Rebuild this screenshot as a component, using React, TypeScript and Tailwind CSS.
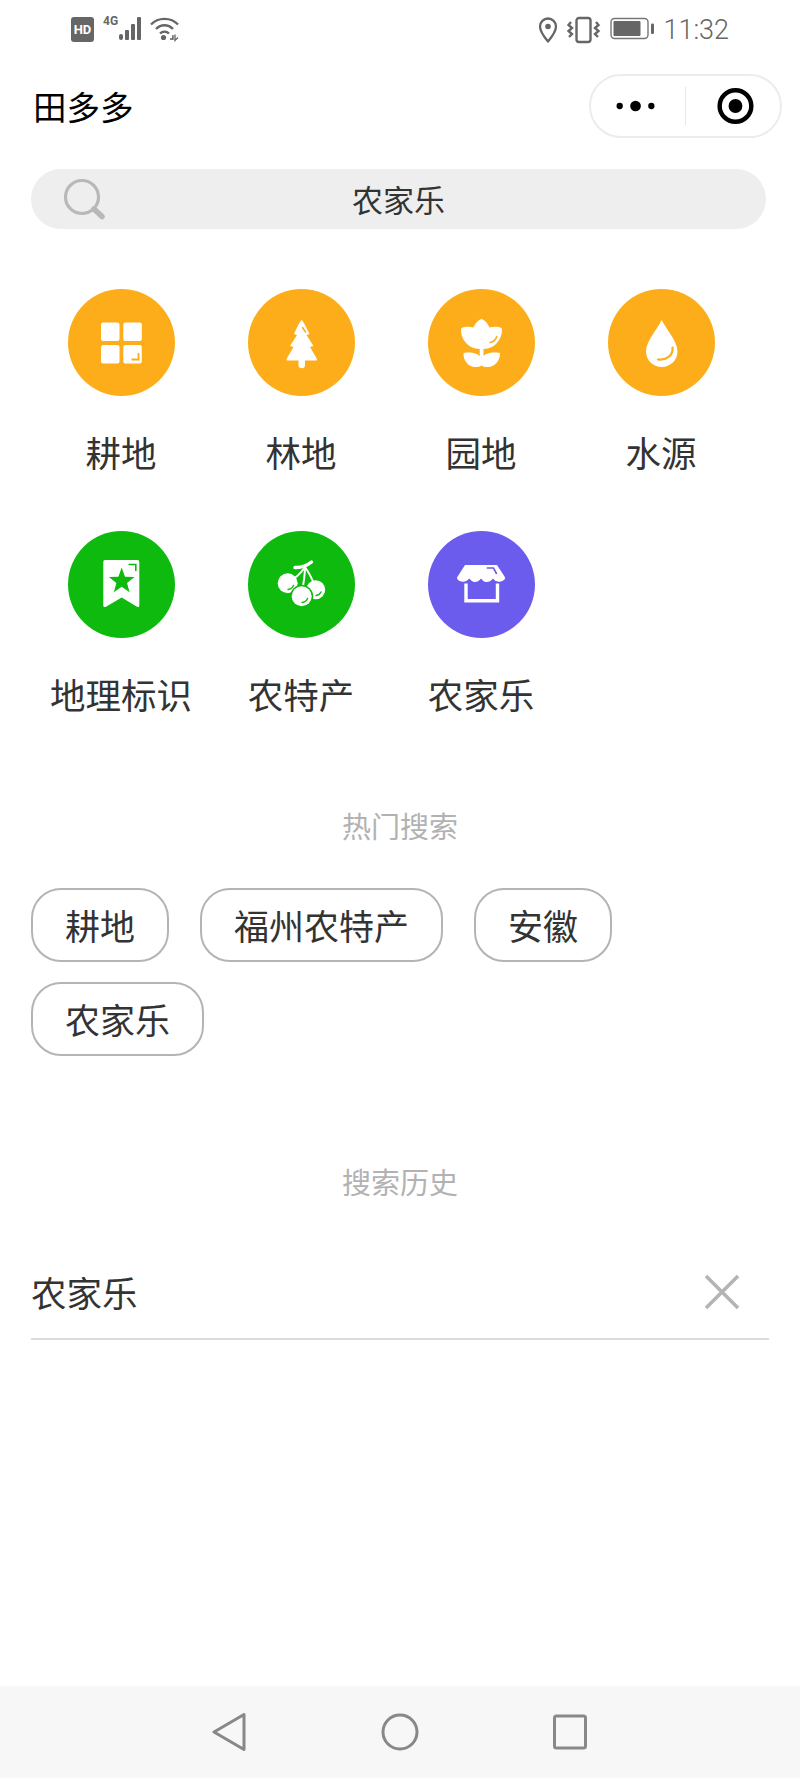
import { ReactNode } from 'react';

const ORANGE = '#fdad19';
const GREEN = '#0dba0d';
const PURPLE = '#6c5ced';

function GridIcon() {
  return (
    <>
      <rect x="33" y="33.5" width="18.5" height="18.5" rx="2" fill="#fff" />
      <rect x="55.3" y="33.5" width="18.5" height="18.5" rx="2" fill="#fff" />
      <rect x="33" y="56" width="18.5" height="18.5" rx="2" fill="#fff" />
      <rect x="55.3" y="56" width="18.5" height="18.5" rx="2" fill="#fff" />
      <path d="M70.5 64v6.5H63.5" fill="none" stroke={ORANGE} strokeWidth="1.8" />
    </>
  );
}

function TreeIcon() {
  return (
    <>
      <path
        d="M53.7 31Q55 31.5 61.5 45L58.5 46L65.5 57L62 58L69 70Q69.5 71.5 68 71.5H57V76a3.2 3.2 0 0 1-6.5 0V71.5H39.5Q38 71.5 38.5 70L45.5 58L42 57L49 46L46 45Q52 31.5 53.7 31Z"
        fill="#fff"
      />
      <path d="M54.5 38.5L57.5 43" stroke={ORANGE} strokeWidth="1.5" strokeLinecap="round" />
    </>
  );
}

function FlowerIcon() {
  return (
    <>
      <path
        d="M53.5 30C57 31 60 35 61.5 38.5C65 37.5 70 37.5 73.7 39C74.5 44 73 50 68 55C64 59 59 60 53.5 60C48 60 43 59 39 55C34 50 32.5 44 33.3 39C37 37.5 42 37.5 45.5 38.5C47 35 50 31 53.5 30Z"
        fill="#fff"
      />
      <rect x="51.7" y="58" width="3.8" height="10" fill="#fff" />
      <path
        d="M35.5 64C43 62.5 50 64.5 53.5 68.5C57 64.5 64 62.5 72 64C72.5 72 66 78 60 78C57 78 55 77.5 53.5 76.5C52 77.5 50 78 47 78C41 78 35 72 35.5 64Z"
        fill="#fff"
      />
      <path d="M62 53.5C65.5 52.8 68 50.5 68.7 47.5" fill="none" stroke={ORANGE} strokeWidth="1.6" strokeLinecap="round" />
    </>
  );
}

function DropIcon() {
  return (
    <>
      <path
        d="M53.7 31C58 40 69.5 52 69.5 62.5C69.5 71 62.5 78 53.7 78C45 78 38 71 38 62.5C38 52 49.5 40 53.7 31Z"
        fill="#fff"
      />
      <path d="M50 70.5C58 71.5 65.5 66.5 64.5 58.5" fill="none" stroke={ORANGE} strokeWidth="2.2" strokeLinecap="round" />
    </>
  );
}

function BookmarkIcon() {
  return (
    <>
      <path
        d="M37 29H69.5Q71.3 29 71.3 31V74.5Q71.3 76.8 69 75.7L53.7 66.5L38 75.7Q35.3 76.8 35.3 74.5V31Q35.3 29 37 29Z"
        fill="#fff"
      />
      <polygon
        points="53.7,36.5 57,45.7 66.5,46 59,52 61.6,61.2 53.7,55.8 45.8,61.2 48.4,52 40.9,46 50.4,45.7"
        fill={GREEN}
      />
      <path d="M60.5 33.5H67.8V40" fill="none" stroke={GREEN} strokeWidth="1.6" />
    </>
  );
}

function CherryIcon() {
  return (
    <>
      <path d="M47 36.5Q56 37 63.5 31" fill="none" stroke="#fff" strokeWidth="3.4" strokeLinecap="round" />
      <path d="M57 36C53 42 48 47 41 51" fill="none" stroke="#fff" strokeWidth="2" />
      <path d="M57 36C57 45 55.5 53 53.7 62" fill="none" stroke="#fff" strokeWidth="2" />
      <path d="M57 36C62 43 65 50 67.5 56" fill="none" stroke="#fff" strokeWidth="2" />
      <circle cx="39.7" cy="52.3" r="10" fill="#fff" />
      <circle cx="67.7" cy="58.7" r="9.5" fill="#fff" />
      <circle cx="53.7" cy="65.3" r="11.5" fill={GREEN} />
      <circle cx="53.7" cy="65.3" r="10" fill="#fff" />
      <path d="M40 58.5Q44 58 45.5 54.5" fill="none" stroke={GREEN} strokeWidth="1.4" strokeLinecap="round" />
      <path d="M54 71.5Q58 71 59.5 67.5" fill="none" stroke={GREEN} strokeWidth="1.4" strokeLinecap="round" />
      <path d="M68 64.5Q71.5 64 73 61" fill="none" stroke={GREEN} strokeWidth="1.4" strokeLinecap="round" />
    </>
  );
}

function ShopIcon() {
  return (
    <>
      <path
        d="M37 34H69L76.5 45.5Q77.5 47 77 48Q74 51.5 70 50.5Q66.5 50 65 47.5Q62 51.5 57.5 51Q55 50.5 53 47.5Q50 51.5 46 51Q43.5 50.5 41.5 47.5Q38 51.5 33.5 50.5Q29 49.5 29 46.5Z"
        fill="#fff"
      />
      <path d="M58.7 37H65.5L68.7 43" fill="none" stroke={PURPLE} strokeWidth="1.6" />
      <path d="M38 52.5V69.7H69.5V52.5" fill="none" stroke="#fff" strokeWidth="3.4" />
    </>
  );
}

function CategoryItem({ label, color, children }: { label: string; color: string; children: ReactNode }) {
  return (
    <div className="flex flex-col items-center">
      <div className="w-[107px] h-[107px] rounded-full" style={{ backgroundColor: color }}>
        <svg width="107" height="107" viewBox="0 0 107 107">{children}</svg>
      </div>
      <span className="mt-[32px] h-[48px] leading-[48px] text-[35.5px] text-[#333] whitespace-nowrap">{label}</span>
    </div>
  );
}

function Tag({ text }: { text: string }) {
  return (
    <div className="h-[74px] px-[32px] flex items-center rounded-[30px] border-2 border-[#b4b4b4] text-[35px] text-[#333]">
      {text}
    </div>
  );
}

function StatusBar() {
  return (
    <div className="h-[50px] pl-[71px] pr-[71px] flex justify-between text-[#666]">
      <div className="flex pt-[15px]">
        <div className="w-[23px] h-[25px] mt-[2px] rounded-[3px] bg-[#666] text-white text-[13px] font-bold leading-[25px] text-center font-['Roboto',sans-serif]">
          HD
        </div>
        <span className="ml-[9px] mt-[-2px] text-[12px] font-bold leading-[16px] font-['Roboto',sans-serif]">4G</span>
        <svg width="25" height="26" viewBox="0 0 25 26" className="mt-[1px] ml-[1px]">
          <g fill="#666">
            <rect x="0" y="18" width="4" height="6" rx="2" />
            <rect x="6" y="14" width="4" height="10" rx="1" />
            <rect x="12" y="8" width="4" height="16" rx="1" />
            <rect x="18" y="1" width="4" height="23" rx="1" />
          </g>
        </svg>
        <svg width="30" height="26" viewBox="0 0 30 26" className="ml-[6px] mt-[1px]">
          <g fill="none" stroke="#666" strokeWidth="2.4">
            <path d="M1 8.5C8 1 21 1 28 8.5" />
            <path d="M6 13C11 8 18 8 23 13" />
            <path d="M10 17.5C12.5 15 16.5 15 19 17.5" />
          </g>
          <circle cx="13.5" cy="21.5" r="2.6" fill="#666" />
          <path d="M20 23H22.5L23 19V24M25 18.5V24.5L28 21.5" fill="none" stroke="#666" strokeWidth="1.3" />
        </svg>
      </div>
      <div className="flex pt-[14px]">
        <svg width="20" height="28" viewBox="0 0 20 28" className="mt-[2px] ml-[1px]">
          <path d="M10 25.5C5 19.5 2 15.5 2 10.5A8 8 0 0 1 18 10.5C18 15.5 15 19.5 10 25.5Z" fill="none" stroke="#666" strokeWidth="2.3" strokeLinejoin="round" />
          <circle cx="10" cy="10.5" r="2.8" fill="#666" />
        </svg>
        <svg width="34" height="28" viewBox="0 0 34 28" className="ml-[9px] mt-[2px]">
          <rect x="9.5" y="2" width="14" height="24" rx="2.5" fill="none" stroke="#666" strokeWidth="2.4" />
          <path d="M4 6L1.5 9L5 12L1.5 15L5 18L2 21" fill="none" stroke="#666" strokeWidth="2.4" />
          <path d="M29 6L31.5 9L28 12L31.5 15L28 18L31 21" fill="none" stroke="#666" strokeWidth="2.4" />
        </svg>
        <svg width="45" height="24" viewBox="0 0 45 24" className="ml-[9px] mt-[3px]">
          <rect x="1" y="1.5" width="37" height="20" rx="3.5" fill="none" stroke="#777" strokeWidth="1.4" />
          <rect x="3.5" y="4" width="27" height="15" rx="1" fill="#666" />
          <rect x="41" y="6.5" width="3" height="10.5" rx="1.2" fill="#666" />
        </svg>
        <span className="ml-[8px] mt-[2px] text-[27px] leading-[28px] font-['Roboto',sans-serif] font-light">11:32</span>
      </div>
    </div>
  );
}

export default function App() {
  return (
    <div className="w-full h-[1778px] flex flex-col bg-white overflow-hidden font-['Noto_Sans_CJK_SC',sans-serif]">
      <StatusBar />

      <div className="mt-[24px] h-[64px] pl-[33px] pr-[18px] flex items-center justify-between">
        <span className="text-[33.5px] text-black">田多多</span>
        <div className="w-[193px] h-[64px] rounded-full border-2 border-[#ececec] flex items-center">
          <svg width="95" height="20" viewBox="0 0 95 20">
            <circle cx="29" cy="10" r="3.2" fill="#000" />
            <circle cx="45" cy="10" r="5.4" fill="#000" />
            <circle cx="61" cy="10" r="3.2" fill="#000" />
          </svg>
          <div className="w-px h-[38px] bg-[#e6e6e6]" />
          <svg width="95" height="40" viewBox="0 0 95 40">
            <circle cx="50" cy="20" r="16" fill="none" stroke="#000" strokeWidth="4.5" />
            <circle cx="50" cy="20" r="7" fill="#000" />
          </svg>
        </div>
      </div>

      <div className="mt-[31px] ml-[31px] mr-[34px] h-[60px] rounded-[30px] bg-[#eeeeee] relative flex items-center justify-center">
        <svg width="44" height="44" viewBox="0 0 44 44" className="absolute left-[32px] top-[9px]">
          <circle cx="19" cy="19" r="16.5" fill="none" stroke="#b8b8b8" strokeWidth="3.2" />
          <path d="M31 31L39 38.5" stroke="#b8b8b8" strokeWidth="5.5" strokeLinecap="round" />
        </svg>
        <span className="text-[31px] text-[#333]">农家乐</span>
      </div>

      <div className="mt-[60px] mx-[31px] grid grid-cols-[repeat(4,180px)] gap-y-[55px]">
        <CategoryItem label="耕地" color={ORANGE}><GridIcon /></CategoryItem>
        <CategoryItem label="林地" color={ORANGE}><TreeIcon /></CategoryItem>
        <CategoryItem label="园地" color={ORANGE}><FlowerIcon /></CategoryItem>
        <CategoryItem label="水源" color={ORANGE}><DropIcon /></CategoryItem>
        <CategoryItem label="地理标识" color={GREEN}><BookmarkIcon /></CategoryItem>
        <CategoryItem label="农特产" color={GREEN}><CherryIcon /></CategoryItem>
        <CategoryItem label="农家乐" color={PURPLE}><ShopIcon /></CategoryItem>
      </div>

      <div className="mt-[87px] h-[40px] leading-[40px] text-center text-[29px] text-[#b2b2b2]">热门搜索</div>

      <div className="mt-[43px] mx-[31px] flex flex-wrap gap-x-[31px] gap-y-[20px]">
        <Tag text="耕地" />
        <Tag text="福州农特产" />
        <Tag text="安徽" />
        <Tag text="农家乐" />
      </div>

      <div className="mt-[105px] h-[40px] leading-[40px] text-center text-[29px] text-[#b2b2b2]">搜索历史</div>

      <div className="mt-[44px] ml-[31px] mr-[31px] h-[95px] border-b-2 border-[#dcdcdc] flex items-center justify-between">
        <span className="text-[35.5px] text-[#333]">农家乐</span>
        <svg width="36" height="36" viewBox="0 0 36 36" className="mr-[29px]">
          <path d="M2 2L34 34M34 2L2 34" stroke="#b4b4b4" strokeWidth="3.6" />
        </svg>
      </div>

      <div className="mt-auto h-[92px] pr-[2px] bg-[#f7f7f7] flex items-center justify-center gap-[135px]">
        <svg width="34" height="40" viewBox="0 0 34 40">
          <path d="M32 2.5V37.5L2 20Z" fill="none" stroke="#888" strokeWidth="3" strokeLinejoin="round" />
        </svg>
        <svg width="38" height="38" viewBox="0 0 38 38">
          <circle cx="19" cy="19" r="17" fill="none" stroke="#888" strokeWidth="3" />
        </svg>
        <svg width="34" height="36" viewBox="0 0 34 36" className="ml-[-1px]">
          <rect x="1.5" y="2" width="31" height="32" rx="2" fill="none" stroke="#888" strokeWidth="3" />
        </svg>
      </div>
    </div>
  );
}
